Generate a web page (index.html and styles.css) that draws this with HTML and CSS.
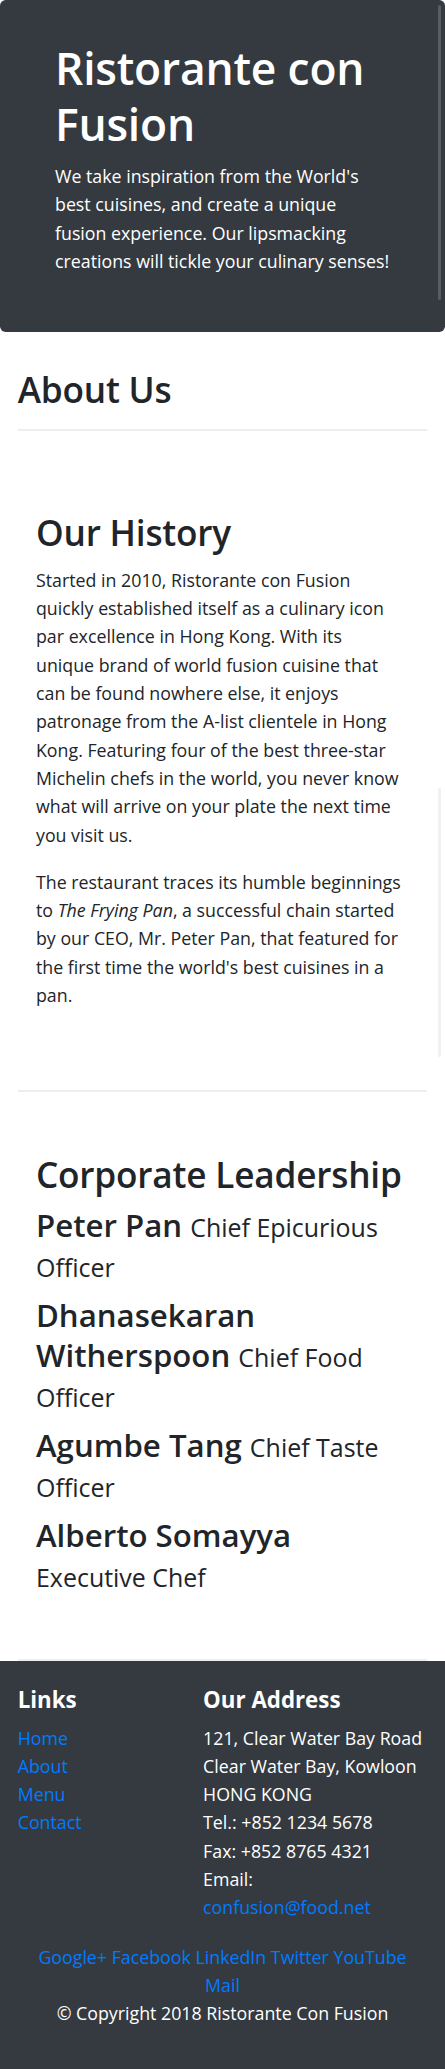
FILE: index.html
```html
<!DOCTYPE html>
<html lang="en">
<head>
<meta charset="utf-8">
<title>Ristorante con Fusion - About Us</title>
<link rel="stylesheet" href="styles.css">
</head>
<body>
<header class="jumbotron">
  <div class="jumbo-inner">
    <h1 class="brand-title">Ristorante con Fusion</h1>
    <p class="brand-lead">We take inspiration from the World's best cuisines, and create a unique fusion experience. Our lipsmacking creations will tickle your culinary senses!</p>
  </div>
</header>

<main class="page">
  <div class="page-head">
    <h2 class="page-title">About Us</h2>
    <hr class="divider">
  </div>

  <section class="block history">
    <h2 class="block-title">Our History</h2>
    <p class="text">Started in 2010, Ristorante con Fusion quickly established itself as a culinary icon par excellence in Hong Kong. With its unique brand of world fusion cuisine that can be found nowhere else, it enjoys patronage from the A-list clientele in Hong Kong. Featuring four of the best three-star Michelin chefs in the world, you never know what will arrive on your plate the next time you visit us.</p>
    <p class="text">The restaurant traces its humble beginnings to <em>The Frying Pan</em>, a successful chain started by our CEO, Mr. Peter Pan, that featured for the first time the world's best cuisines in a pan.</p>
  </section>

  <hr class="divider">

  <section class="block leadership">
    <h2 class="block-title">Corporate Leadership</h2>
    <h3 class="leader">Peter Pan <small class="role">Chief Epicurious Officer</small></h3>
    <h3 class="leader">Dhanasekaran Witherspoon <small class="role">Chief Food Officer</small></h3>
    <h3 class="leader">Agumbe Tang <small class="role">Chief Taste Officer</small></h3>
    <h3 class="leader">Alberto Somayya <small class="role">Executive Chef</small></h3>
  </section>

  <hr class="divider">
</main>

<footer class="site-footer">
  <div class="footer-grid">
    <div class="footer-col">
      <h5 class="footer-title">Links</h5>
      <ul class="footer-links">
        <li><a href="#">Home</a></li>
        <li><a href="#">About</a></li>
        <li><a href="#">Menu</a></li>
        <li><a href="#">Contact</a></li>
      </ul>
    </div>
    <div class="footer-col">
      <h5 class="footer-title">Our Address</h5>
      <address class="address">
        121, Clear Water Bay Road<br>
        Clear Water Bay, Kowloon<br>
        HONG KONG<br>
        Tel.: +852 1234 5678<br>
        Fax: +852 8765 4321<br>
        Email:<br>
        <a href="mailto:confusion@food.net">confusion@food.net</a>
      </address>
    </div>
  </div>
  <div class="social">
    <a href="#">Google+</a> <a href="#">Facebook</a> <a href="#">LinkedIn</a> <a href="#">Twitter</a> <a href="#">YouTube</a> <a href="#">Mail</a>
  </div>
  <p class="copyright">© Copyright 2018 Ristorante Con Fusion</p>
</footer>

<span class="scroll-thumb thumb-dark"></span>
<span class="scroll-thumb thumb-light"></span>
</body>
</html>
```

FILE: styles.css
```css
html, body {
  margin: 0;
  padding: 0;
}

body {
  position: relative;
  font-family: "Open Sans", "Noto Sans", "Liberation Sans", sans-serif;
  font-size: 17.8px;
  line-height: 28.33px;
  color: #212529;
  background: #ffffff;
}

a {
  color: #007bff;
  text-decoration: none;
}

/* ---------- Jumbotron ---------- */
.jumbotron {
  background: #343a40;
  color: #ffffff;
  border-radius: 5.7px;
  margin: 0 0 35px;
  padding: 39.5px 55px 37.7px;
}

.brand-title {
  margin: 0 0 9.44px;
  font-size: 44.4px;
  line-height: 56.6px;
  font-weight: 600;
  letter-spacing: -0.2px;
}

.brand-lead {
  margin: 0 0 18.88px;
}

/* ---------- Main content ---------- */
.page {
  padding: 0 17.7px;
}

.page-title,
.block-title {
  margin: 0;
  font-size: 35.2px;
  line-height: 45.3px;
  font-weight: 600;
  letter-spacing: -0.2px;
}

.divider {
  border: 0;
  border-top: 2px solid #eeeeee;
  height: 0;
  margin: 0;
}

.page-head .divider {
  margin-top: 16.7px;
}

.block {
  padding-left: 18.3px;
  padding-right: 23px;
}

.history {
  padding-top: 79.4px;
  padding-bottom: 61.6px;
}

.history .block-title {
  margin-bottom: 10px;
}

.text {
  margin: 0 0 18.88px;
}

.leadership {
  padding-top: 60px;
  padding-bottom: 54px;
}

.leadership .block-title {
  margin-bottom: 8px;
}

.leader {
  margin: 0 0 10px;
  font-size: 31.2px;
  line-height: 40px;
  font-weight: 600;
}

.role {
  font-size: 80%;
  font-weight: 400;
  line-height: 1;
}

/* ---------- Footer ---------- */
.site-footer {
  background: #343a40;
  color: #ffffff;
  padding: 24.5px 17.7px 22.8px;
}

.footer-grid {
  display: grid;
  grid-template-columns: 150px 1fr;
  column-gap: 35.4px;
}

.footer-title {
  margin: 0 0 9.44px;
  font-size: 22.3px;
  line-height: 28.33px;
  font-weight: 700;
}

.footer-links {
  list-style: none;
  margin: 0 0 18.88px;
  padding: 0;
}

.address {
  font-style: normal;
  margin: 0 0 18.88px;
}

.social {
  max-width: 385px;
  margin: 2px auto 0;
  text-align: center;
}

.copyright {
  text-align: center;
  margin: 0 0 18.88px;
}

/* ---------- Overlay scrollbar thumbs captured in the screenshot ---------- */
.scroll-thumb {
  position: absolute;
  left: 438px;
  width: 3px;
  border-radius: 2px;
}

.thumb-dark {
  top: 5px;
  height: 295px;
  background: #585d64;
}

.thumb-light {
  top: 788px;
  height: 269px;
  background: #f1f1f1;
}
```
